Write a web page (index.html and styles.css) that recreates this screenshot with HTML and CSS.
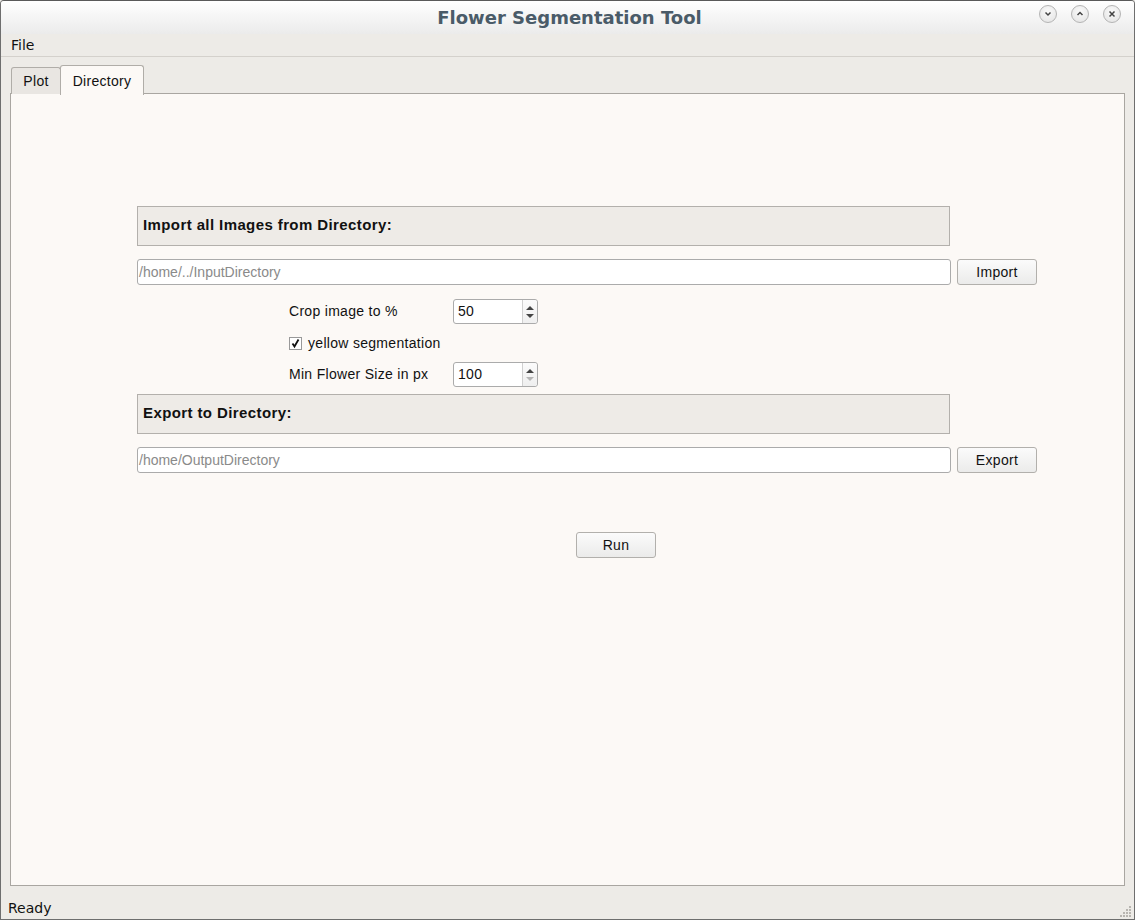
FILE: index.html
```html
<!DOCTYPE html>
<html>
<head>
<meta charset="utf-8">
<link rel="stylesheet" href="styles.css">
</head>
<body>
<div class="window">
  <div class="titlebar">
    <div class="title">Flower Segmentation Tool</div>
    <div class="wbuttons">
      <span class="wbtn"><svg width="10" height="10" viewBox="0 0 10 10"><path d="M2.5 3.5 L5 6 L7.5 3.5" fill="none" stroke="#444" stroke-width="1.5"/></svg></span>
      <span class="wbtn"><svg width="10" height="10" viewBox="0 0 10 10"><path d="M2.5 6 L5 3.5 L7.5 6" fill="none" stroke="#444" stroke-width="1.5"/></svg></span>
      <span class="wbtn"><svg width="10" height="10" viewBox="0 0 10 10"><path d="M2.5 2.5 L7.5 7.5 M7.5 2.5 L2.5 7.5" fill="none" stroke="#444" stroke-width="1.5"/></svg></span>
    </div>
  </div>
  <div class="menubar"><span class="menu">File</span></div>
  <div class="tabarea">
    <div class="tabbar">
      <div class="tab">Plot</div>
      <div class="tab active">Directory</div>
    </div>
    <div class="pane">
      <div class="content">
        <div class="section">Import all Images from Directory:</div>
        <div class="pathrow">
          <div class="field"><span class="placeholder">/home/../InputDirectory</span></div>
          <div class="btn">Import</div>
        </div>
        <div class="formrow first">
          <span class="label">Crop image to %</span>
          <div class="spin"><span class="val">50</span><span class="arrows"><span class="up"></span><span class="down"></span></span></div>
        </div>
        <div class="checkrow">
          <span class="check"><svg width="11" height="11" viewBox="0 0 11 11"><path d="M2.5 5.5 L4.5 8.5 L8.5 1.5" fill="none" stroke="#111" stroke-width="1.8"/></svg></span>
          <span class="checklabel">yellow segmentation</span>
        </div>
        <div class="formrow">
          <span class="label">Min Flower Size in px</span>
          <div class="spin"><span class="val">100</span><span class="arrows"><span class="up"></span><span class="down dim"></span></span></div>
        </div>
        <div class="section export">Export to Directory:</div>
        <div class="pathrow">
          <div class="field"><span class="placeholder">/home/OutputDirectory</span></div>
          <div class="btn">Export</div>
        </div>
        <div class="runrow">
          <div class="btn">Run</div>
        </div>
      </div>
    </div>
  </div>
  <div class="statusbar">
    <span class="status">Ready</span>
    <svg class="grip" width="12" height="12" viewBox="0 0 12 12">
      <g fill="#b8b5b0">
        <rect x="9" y="1" width="2" height="2"/>
        <rect x="6" y="4" width="2" height="2"/><rect x="9" y="4" width="2" height="2"/>
        <rect x="3" y="7" width="2" height="2"/><rect x="6" y="7" width="2" height="2"/><rect x="9" y="7" width="2" height="2"/>
        <rect x="0" y="10" width="2" height="2"/><rect x="3" y="10" width="2" height="2"/><rect x="6" y="10" width="2" height="2"/><rect x="9" y="10" width="2" height="2"/>
      </g>
    </svg>
  </div>
</div>
</body>
</html>
```
FILE: styles.css
```css
html, body {
  margin: 0;
  padding: 0;
  background: #edebe7;
}
.window {
  width: 1135px;
  height: 920px;
  box-sizing: border-box;
  border: 1px solid #6e6e6e;
  border-top-color: #5a5a5a;
  border-radius: 4px 4px 0 0;
  display: flex;
  flex-direction: column;
  background: #edebe7;
  overflow: hidden;
}
.titlebar {
  height: 33px;
  flex: none;
  background: linear-gradient(#ffffff, #ebebeb);
  position: relative;
  display: flex;
  align-items: center;
  justify-content: center;
}
.title {
  font-family: "DejaVu Sans", sans-serif;
  font-weight: bold;
  font-size: 18px;
  color: #4a5b68;
  margin-left: 4px;
  margin-top: 0px;
}
.wbuttons {
  position: absolute;
  right: 13px;
  top: 4px;
  display: flex;
  gap: 14px;
}
.wbtn {
  width: 16px;
  height: 16px;
  border-radius: 50%;
  border: 1px solid #b4b4b4;
  background: radial-gradient(circle at 50% 35%, #fafafa, #e2e2e2);
  display: flex;
  align-items: center;
  justify-content: center;
}
.menubar {
  height: 22px;
  flex: none;
  border-bottom: 1px solid #d4d1cc;
  font-family: "DejaVu Sans", sans-serif;
  font-size: 14px;
  color: #111;
  display: flex;
  align-items: center;
}
.menu {
  margin-left: 10px;
  margin-top: -1px;
}
.tabarea {
  flex: 1;
  display: flex;
  flex-direction: column;
  padding: 9px 9px 0 9px;
  font-family: "Liberation Sans", Arial, sans-serif;
  font-size: 14px;
  letter-spacing: 0.3px;
  color: #111;
}
.tabbar {
  display: flex;
  align-items: flex-end;
  height: 28px;
  padding-left: 1px;
  position: relative;
  z-index: 1;
  margin-bottom: -1px;
}
.tab {
  height: 27px;
  box-sizing: border-box;
  border: 1px solid #b0ada8;
  border-bottom: none;
  border-radius: 3px 3px 0 0;
  background: #e9e6e2;
  padding: 0 11px 0 11px;
  width: 50px;
  justify-content: center;
  display: flex;
  align-items: center;
}
.tab.active {
  background: #fcf9f6;
  width: 84px;
  padding: 0;
  margin-left: -1px;
  height: 30px;
  margin-bottom: -1px;
}
.pane {
  flex: 1;
  border: 1px solid #a9a6a1;
  background: #fcf9f6;
}
.content {
  margin-left: 126px;
  margin-top: 112px;
  width: 900px;
}
.section {
  width: 813px;
  height: 40px;
  box-sizing: border-box;
  border: 1px solid #b3b0ac;
  background: #eeebe7;
  font-weight: bold;
  font-size: 15px;
  letter-spacing: 0.4px;
  display: flex;
  align-items: center;
  padding-left: 5px;
  padding-bottom: 3px;
}
.section.export {
  margin-top: 7px;
}
.pathrow {
  display: flex;
  margin-top: 13px;
  gap: 6px;
}
.field {
  width: 814px;
  height: 26px;
  box-sizing: border-box;
  border: 1px solid #ababab;
  border-radius: 3px;
  background: #fff;
  display: flex;
  align-items: center;
  padding-left: 1px;
  padding-bottom: 1px;
}
.placeholder {
  color: #8a8a8a;
  letter-spacing: 0;
}
.btn {
  width: 80px;
  height: 26px;
  box-sizing: border-box;
  border: 1px solid #b2b0ac;
  border-radius: 3px;
  background: linear-gradient(#fbfbfb, #ebebea);
  display: flex;
  align-items: center;
  justify-content: center;
  padding-bottom: 1px;
}
.formrow {
  display: flex;
  align-items: center;
  margin-left: 152px;
  height: 25px;
  margin-top: 14px;
}
.label {
  width: 164px;
  margin-top: -2px;
}
.spin {
  width: 85px;
  height: 25px;
  box-sizing: border-box;
  border: 1px solid #ababab;
  border-radius: 3px;
  background: #fff;
  display: flex;
  align-items: stretch;
}
.val {
  flex: 1;
  padding-left: 4px;
  display: flex;
  align-items: center;
  padding-bottom: 1px;
}
.arrows {
  width: 14px;
  border-left: 1px solid #d0d0d0;
  display: flex;
  flex-direction: column;
  align-items: center;
  justify-content: center;
  gap: 4px;
  background: linear-gradient(#fbfbfb, #efefef);
  border-radius: 0 3px 3px 0;
}
.up {
  width: 0;
  height: 0;
  border-left: 4px solid transparent;
  border-right: 4px solid transparent;
  border-bottom: 4px solid #444;
}
.down {
  width: 0;
  height: 0;
  border-left: 4px solid transparent;
  border-right: 4px solid transparent;
  border-top: 4px solid #444;
}
.down.dim {
  border-top-color: #b5b5b5;
}
.checkrow {
  display: flex;
  align-items: center;
  margin-left: 152px;
  margin-top: 9px;
  height: 21px;
}
.check {
  width: 13px;
  height: 13px;
  box-sizing: border-box;
  border: 1px solid #999;
  background: #fff;
  display: flex;
  align-items: center;
  justify-content: center;
  margin-right: 6px;
  margin-top: -1px;
}
.checklabel {
  margin-top: -2px;
}
.checkrow + .formrow {
  margin-top: 8px;
}
.runrow {
  margin-top: 59px;
  margin-left: 439px;
}
.statusbar {
  height: 33px;
  flex: none;
  display: flex;
  align-items: center;
  position: relative;
  font-family: "DejaVu Sans", sans-serif;
  font-size: 14px;
  color: #111;
}
.status {
  margin-left: 7px;
  margin-top: 10px;
}
.grip {
  position: absolute;
  right: 2px;
  bottom: 2px;
}
```
